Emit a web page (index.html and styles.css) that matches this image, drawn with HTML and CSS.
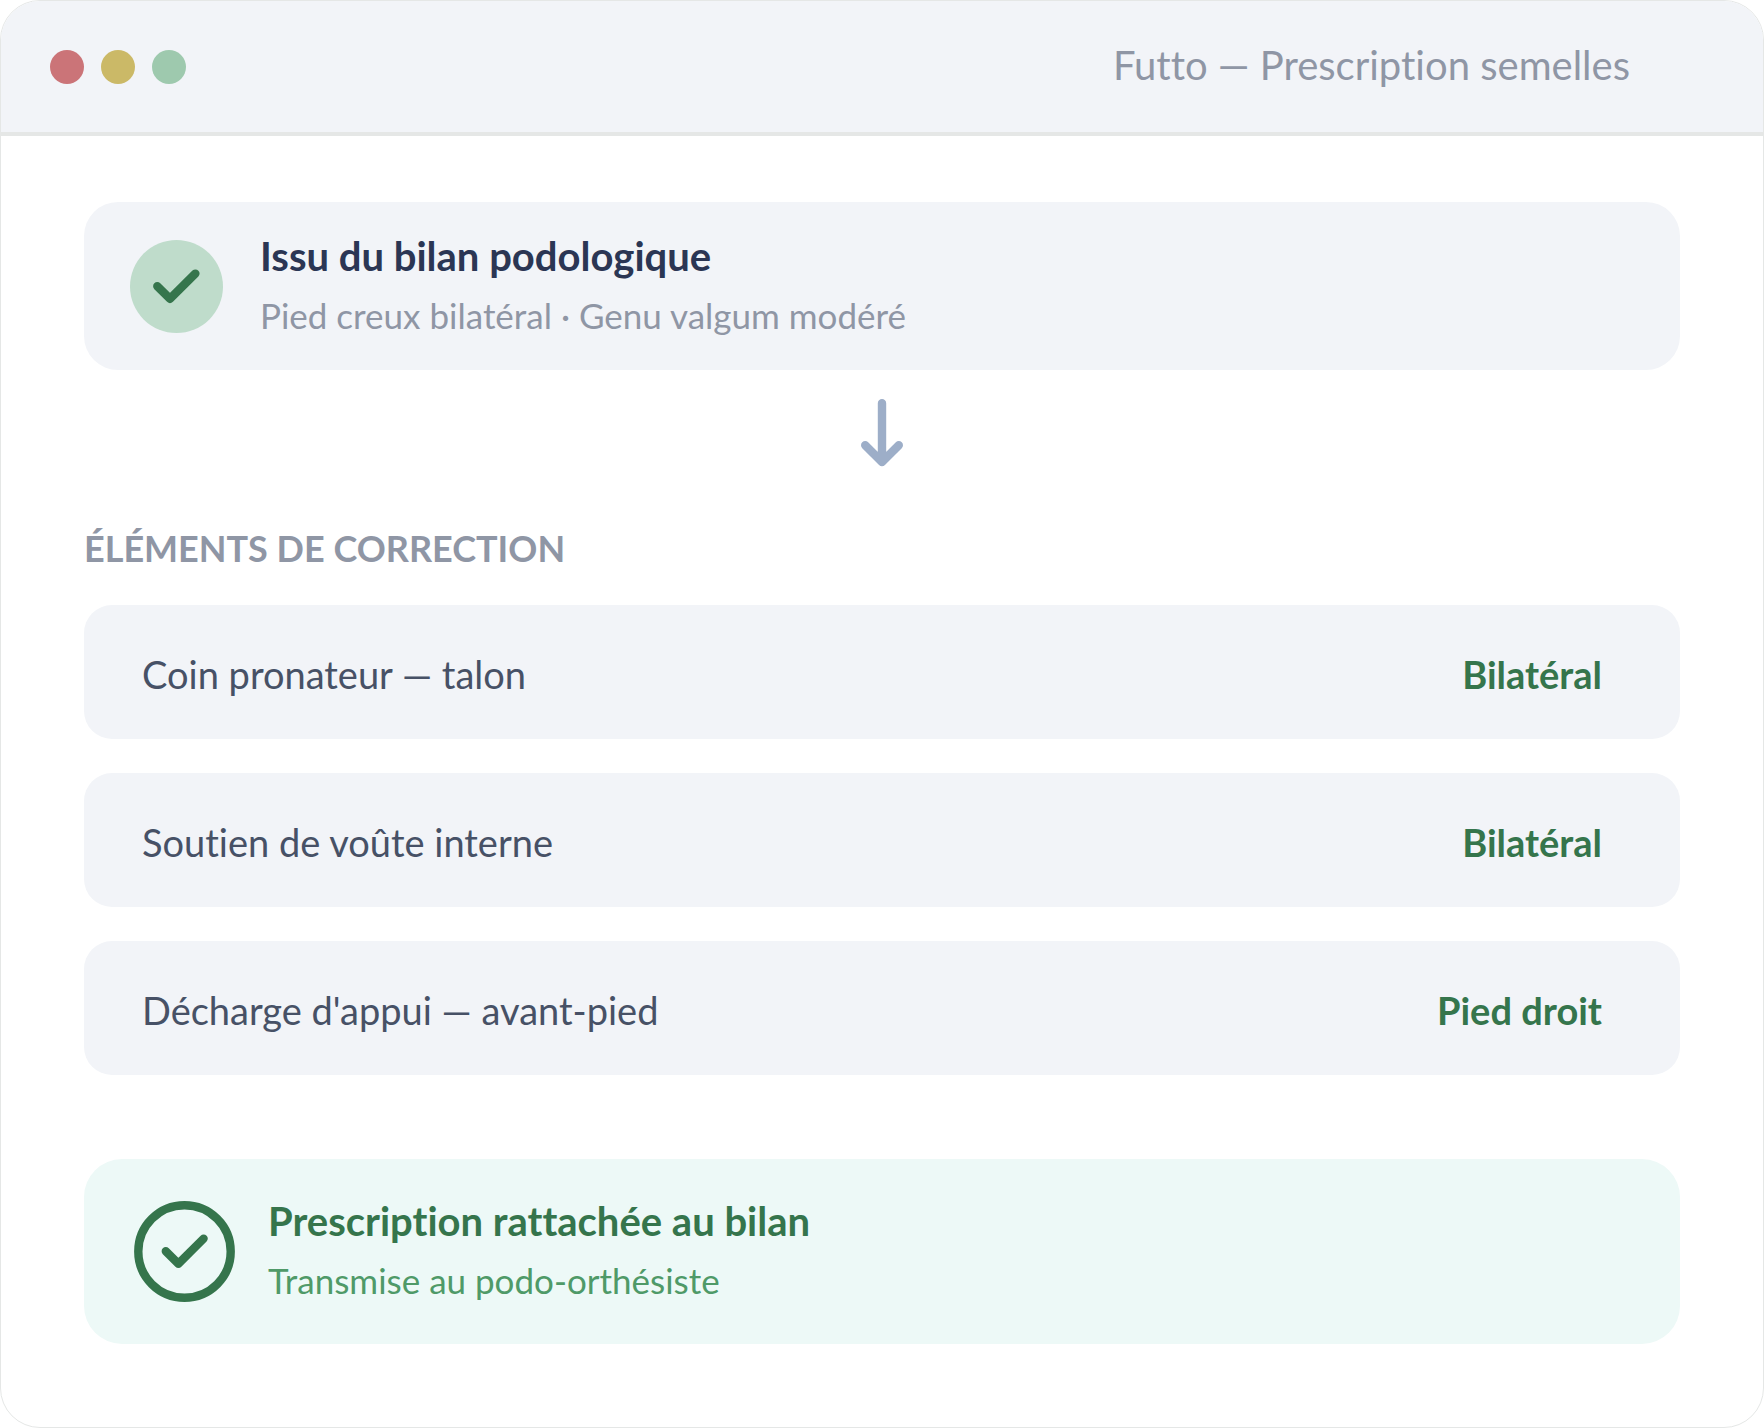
FILE: index.html
```html
<!DOCTYPE html>
<html lang="fr">
<head>
<meta charset="utf-8">
<meta name="viewport" content="width=device-width, initial-scale=1">
<title>Futto — Prescription semelles</title>
<link rel="stylesheet" href="styles.css">
</head>
<body>
<main class="window">
  <header class="titlebar">
    <div class="dots" aria-hidden="true">
      <span class="dot dot-red"></span>
      <span class="dot dot-yellow"></span>
      <span class="dot dot-green"></span>
    </div>
    <h1 class="window-title">Futto — Prescription semelles</h1>
  </header>
  <div class="content">
    <section class="card source">
      <svg class="source-icon" viewBox="0 0 93 93" aria-hidden="true">
        <circle cx="46.5" cy="46.5" r="46.5" fill="#bfdccb"/>
        <path d="M27.3 46.2 40 58.8 65.4 33.6" fill="none" stroke="#35754c" stroke-width="8.4" stroke-linecap="round" stroke-linejoin="round"/>
      </svg>
      <div class="card-text">
        <h2 class="card-title">Issu du bilan podologique</h2>
        <p class="card-note">Pied creux bilatéral · Genu valgum modéré</p>
      </div>
    </section>
    <svg class="arrow" viewBox="0 0 42 68" aria-hidden="true">
      <path d="M21 4.2V63M4.2 46.2 21 63 37.8 46.2" fill="none" stroke="#9daec8" stroke-width="8.4" stroke-linecap="round" stroke-linejoin="round"/>
    </svg>
    <h2 class="section-title">ÉLÉMENTS DE CORRECTION</h2>
    <ul class="rows">
      <li class="row"><span class="row-name">Coin pronateur — talon</span><strong class="row-side">Bilatéral</strong></li>
      <li class="row"><span class="row-name">Soutien de voûte interne</span><strong class="row-side">Bilatéral</strong></li>
      <li class="row"><span class="row-name">Décharge d'appui — avant-pied</span><strong class="row-side">Pied droit</strong></li>
    </ul>
    <section class="card success">
      <svg class="success-icon" viewBox="0 0 101 101" aria-hidden="true">
        <circle cx="50.5" cy="50.5" r="46.2" fill="none" stroke="#35754c" stroke-width="8.4"/>
        <path d="M31.8 50.2 44.4 62.8 69.6 37.6" fill="none" stroke="#35754c" stroke-width="8.4" stroke-linecap="round" stroke-linejoin="round"/>
      </svg>
      <div class="card-text">
        <h2 class="card-title">Prescription rattachée au bilan</h2>
        <p class="card-note">Transmise au podo-orthésiste</p>
      </div>
    </section>
  </div>
</main>
</body>
</html>
```

FILE: styles.css
```css
* {
  box-sizing: border-box;
  margin: 0;
  padding: 0;
}

body {
  background: #fff;
  font-family: Lato, "Liberation Sans", sans-serif;
  font-variant-ligatures: none;
}

.window {
  min-height: 100vh;
  border: 1px solid #e5e7e6;
  border-radius: 40px;
  overflow: hidden;
  background: #fff;
}

.titlebar {
  display: flex;
  align-items: center;
  justify-content: space-between;
  padding: 42px 133px 41px 49px;
  border-bottom: 4px solid #e5e7e6;
  background: #f2f4f8;
}

.dots {
  display: flex;
  gap: 17px;
}

.dot {
  width: 34px;
  height: 34px;
  border-radius: 50%;
}

.dot-red { background: #cb7478; }
.dot-yellow { background: #cbb967; }
.dot-green { background: #9ec9ae; }

.window-title {
  padding-bottom: 4px;
  font-size: 40px;
  font-weight: 400;
  line-height: 44px;
  color: #8f96a5;
}

.content {
  display: flex;
  flex-direction: column;
  padding: 66px 83px 83px;
}

.card {
  display: flex;
  align-items: center;
}

.source {
  gap: 37px;
  padding: 30px 46px;
  border-radius: 34px;
  background: #f2f4f8;
}

.source-icon {
  flex: none;
  width: 93px;
  height: 93px;
}

.card-text {
  display: flex;
  flex-direction: column;
  gap: 16px;
  padding-bottom: 6px;
}

.card-title {
  font-size: 40px;
  font-weight: 700;
  line-height: 48px;
  color: #2b3654;
}

.card-note {
  font-size: 35px;
  line-height: 38px;
  color: #8f96a5;
}

.arrow {
  align-self: center;
  width: 42px;
  height: 68px;
  margin-top: 29px;
}

.section-title {
  margin-top: 57px;
  font-size: 36px;
  font-weight: 700;
  line-height: 48px;
  color: #8f96a5;
}

.rows {
  display: flex;
  flex-direction: column;
  gap: 34px;
  margin-top: 33px;
  list-style: none;
}

.row {
  display: flex;
  align-items: center;
  justify-content: space-between;
  padding: 45px 78px 41px 58px;
  border-radius: 28px;
  background: #f2f4f8;
}

.row-name {
  font-size: 38px;
  line-height: 48px;
  color: #475166;
}

.row-side {
  font-size: 38px;
  font-weight: 700;
  line-height: 48px;
  color: #35754c;
}

.success {
  gap: 33px;
  margin-top: 84px;
  padding: 38px 50px 39px;
  border-radius: 38px;
  background: #edf9f7;
}

.success-icon {
  flex: none;
  width: 101px;
  height: 101px;
}

.success .card-title { color: #35754c; }
.success .card-note { color: #4f9a68; }
```
